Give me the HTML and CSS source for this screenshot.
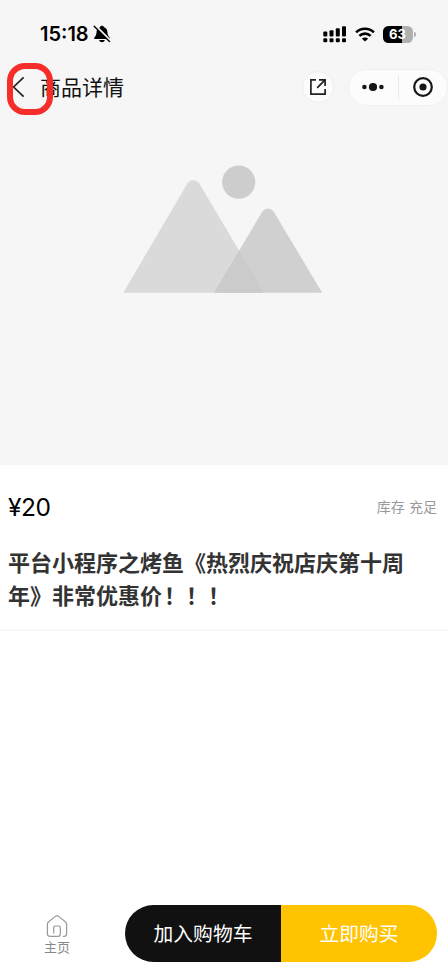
FILE: index.html
```html
<!DOCTYPE html>
<html lang="zh-CN">
<head>
<meta charset="utf-8">
<title>商品详情</title>
<link rel="stylesheet" href="styles.css">
</head>
<body>
<div class="page">
  <section class="hero">
    <header class="status">
      <span class="time">15:18</span>
      <svg class="bell" width="18" height="18" viewBox="0 0 18 18">
        <path d="M9 .8C7.9 .8 7.2 1.4 7.1 2.2C4.5 3 3.6 5.2 3.5 7.5C3.4 10 2.4 11.2 1.4 12.4C.8 13.1 1.2 14 2.1 14H15.9C16.8 14 17.2 13.1 16.6 12.4C15.6 11.2 14.6 10 14.5 7.5C14.4 5.2 13.5 3 10.9 2.2C10.8 1.4 10.1 .8 9 .8ZM6.2 15H11.8C11.5 16.5 10.4 17.2 9 17.2S6.5 16.5 6.2 15Z" fill="#000"/>
        <path d="M2.2 .5L17.3 15.7" stroke="#f6f6f6" stroke-width="2.4"/>
        <path d="M1.2 1.2L16.5 16.5" stroke="#000" stroke-width="1.4" stroke-linecap="round"/>
      </svg>
      <div class="indicators">
        <svg width="24" height="17" viewBox="0 0 24 17">
          <rect x="0.3" y="5.4" width="4" height="5" rx="1"/><rect x="6.5" y="4.3" width="4" height="6.1" rx="1"/><rect x="12.8" y="2.3" width="4" height="8.1" rx="1"/><rect x="19" y="0.3" width="4" height="10.1" rx="1"/>
          <rect x="0.3" y="12.3" width="4" height="4" rx="1.1"/><rect x="6.5" y="12.3" width="4" height="4" rx="1.1"/><rect x="12.8" y="12.3" width="4" height="4" rx="1.1"/><rect x="19" y="12.3" width="4" height="4" rx="1.1"/>
        </svg>
        <svg class="wifi" width="20" height="15" viewBox="0 0 20 15" fill="none" stroke="#000" stroke-width="2.6">
          <path d="M1.1 5.4A12.7 12.7 0 0 1 18.9 5.4M4.4 8.9A8 8 0 0 1 15.6 8.9"/>
          <path d="M10 14.6L6.9 11.7A4.4 4.4 0 0 1 13.1 11.7Z" fill="#000" stroke="none"/>
        </svg>
        <span class="battery">63</span><span class="battery-cap"></span>
      </div>
    </header>
    <nav class="nav">
      <svg class="back" width="13" height="22" viewBox="0 0 13 22"><path d="M11.6 1.3L1.6 11L11.6 20.7" fill="none" stroke="#222" stroke-width="1.7"/></svg>
      <h1 class="nav-title">商品详情</h1>
      <div class="share">
        <svg width="16" height="16" viewBox="0 0 16 16" fill="none" stroke="#222" stroke-width="1.7"><path d="M6 .9H.9V15.1H15.1V10M9 .9H15.1V7M14.8 1.2L7.2 8.8"/></svg>
      </div>
      <div class="capsule">
        <svg width="22" height="10" viewBox="0 0 22 10" fill="#161616"><circle cx="2.4" cy="5" r="2.3"/><circle cx="11" cy="5" r="4.1"/><circle cx="19.4" cy="5" r="2.3"/></svg>
        <span class="divider"></span>
        <svg width="20" height="20" viewBox="0 0 20 20"><circle cx="10" cy="10" r="8.8" fill="none" stroke="#161616" stroke-width="2.2"/><circle cx="10" cy="10" r="3.6" fill="#161616"/></svg>
      </div>
      <span class="highlight"></span>
    </nav>
    <svg class="placeholder" width="200" height="128" viewBox="0 0 200 128">
      <path d="M0.3 127.7L64.5 18.2Q70.2 12 76.2 18.2L141 127.7Z" fill="#dadada"/>
      <path d="M91 127.7L139.4 46.5Q145 40.6 150.6 46.5L199.2 127.7Z" fill="#d0d0d0"/>
      <path d="M91 127.7L116.1 85.6L141 127.7Z" fill="#cbcbcb"/>
      <circle cx="115.7" cy="17.2" r="16.6" fill="#cdcdcd"/>
    </svg>
  </section>
  <section class="info">
    <div class="price-row"><span class="price">¥20</span><span class="stock">库存 充足</span></div>
    <h2 class="product">平台小程序之烤鱼《热烈庆祝店庆第十周年》非常优惠价<span class="marks">！！！</span></h2>
  </section>
  <footer class="bottom">
    <a class="home">
      <svg width="22" height="24" viewBox="0 0 22 24" fill="none" stroke="#999" stroke-width="1.2" stroke-linecap="round"><path d="M7.7 19V13.5Q7.7 12 9.2 12H12.8Q14.3 12 14.3 13.5V20Q14.3 22.4 12 22.4H4Q1.4 22.4 1.4 20V10.3Q1.4 8.7 2.7 7.7L9.6 2.1Q11 1 12.4 2.1L19.3 7.7Q20.6 8.7 20.6 10.3V20Q20.6 22.4 18 22.4H17.4"/></svg>
      <span>主页</span>
    </a>
    <div class="actions"><button class="cart">加入购物车</button><button class="buy">立即购买</button></div>
  </footer>
</div>
</body>
</html>
```
FILE: styles.css
```css
* { box-sizing: border-box; }
body {
  margin: 0;
  background: #fff;
  font-family: Inter, "Noto Sans CJK SC", sans-serif;
}
.page { width: 448px; height: 970px; display: flex; flex-direction: column; overflow: hidden; }
.hero { height: 465px; flex: none; background: #f6f6f6; }
.status { height: 68px; padding: 0 32px 0 40px; display: flex; align-items: center; }
.time { font-size: 20px; font-weight: 600; line-height: 24px; width: 49px; white-space: nowrap; }
.bell { margin-left: 4px; }
.indicators { margin-left: auto; display: flex; align-items: center; }
.wifi { margin-left: 8px; }
.battery {
  width: 30px; height: 17px; margin-left: 8px; border-radius: 5.5px;
  background: linear-gradient(90deg, #000 63%, #b0b0b0 63%);
  color: #fff; font-size: 13px; font-weight: 700; line-height: 17px; text-align: center; padding-right: 1px;
}
.battery-cap { width: 2px; height: 5px; margin-left: 1px; border-radius: 0 2px 2px 0; background: #b0b0b0; }
.nav { position: relative; height: 38px; display: flex; align-items: center; padding-left: 12px; }
.back { flex: none; }
.nav-title { margin: 2px 0 0 15px; font-size: 21px; font-weight: 400; line-height: 30px; color: #111; }
.share {
  width: 32px; height: 32px; margin-left: auto; border: 1px solid #eee; border-radius: 50%;
  background: #fcfcfc; display: flex; align-items: center; justify-content: center;
}
.capsule {
  width: 100px; height: 37px; margin-left: 14px; padding: 0 14px 0 13px; border: 1px solid #f0f0f0; border-radius: 19px;
  background: #fcfcfc; display: flex; align-items: center;
  justify-content: space-between;
}
.divider { width: 1px; height: 23px; background: #e9e9e9; }
.highlight {
  position: absolute; left: 7px; top: -5px; width: 46px; height: 52px;
  border: 6px solid #f62d28; border-radius: 18px;
}
.placeholder { display: block; margin: 59px 0 0 123px; }
.info { height: 166px; flex: none; padding: 27px 11px 0 8px; border-bottom: 2px solid #f7f7f7; }
.price-row { height: 30px; display: flex; align-items: center; justify-content: space-between; }
.price { font-size: 24.5px; line-height: 30px; color: #000; letter-spacing: -.4px; }
.stock { margin-bottom: 3px; font-family: "Noto Sans CJK SC", sans-serif; font-size: 14px; line-height: 20px; color: #999; word-spacing: 1px; }
.product {
  width: 400px; margin: 23px 0 0; font-family: "Noto Sans CJK SC", sans-serif;
  font-size: 22px; line-height: 33px; font-weight: 700; color: #333;
}
.marks { padding-left: 2px; }
.bottom { height: 65px; margin-top: auto; padding-right: 11px; display: flex; }
.home {
  width: 114px; flex: none; padding-top: 9px; display: flex; flex-direction: column; align-items: center;
  font-size: 13px; line-height: 18px; color: #888;
}
.home svg { flex: none; }
.actions { width: 312px; height: 57px; margin-left: auto; display: flex; border-radius: 29px; overflow: hidden; }
.actions button {
  flex: 1; padding: 0 0 2px; border: 0; color: #fff;
  font: 400 19.8px/55px "Noto Sans CJK SC", sans-serif;
}
.cart { background: #111; }
.actions .buy { background: #ffc300; }
```
